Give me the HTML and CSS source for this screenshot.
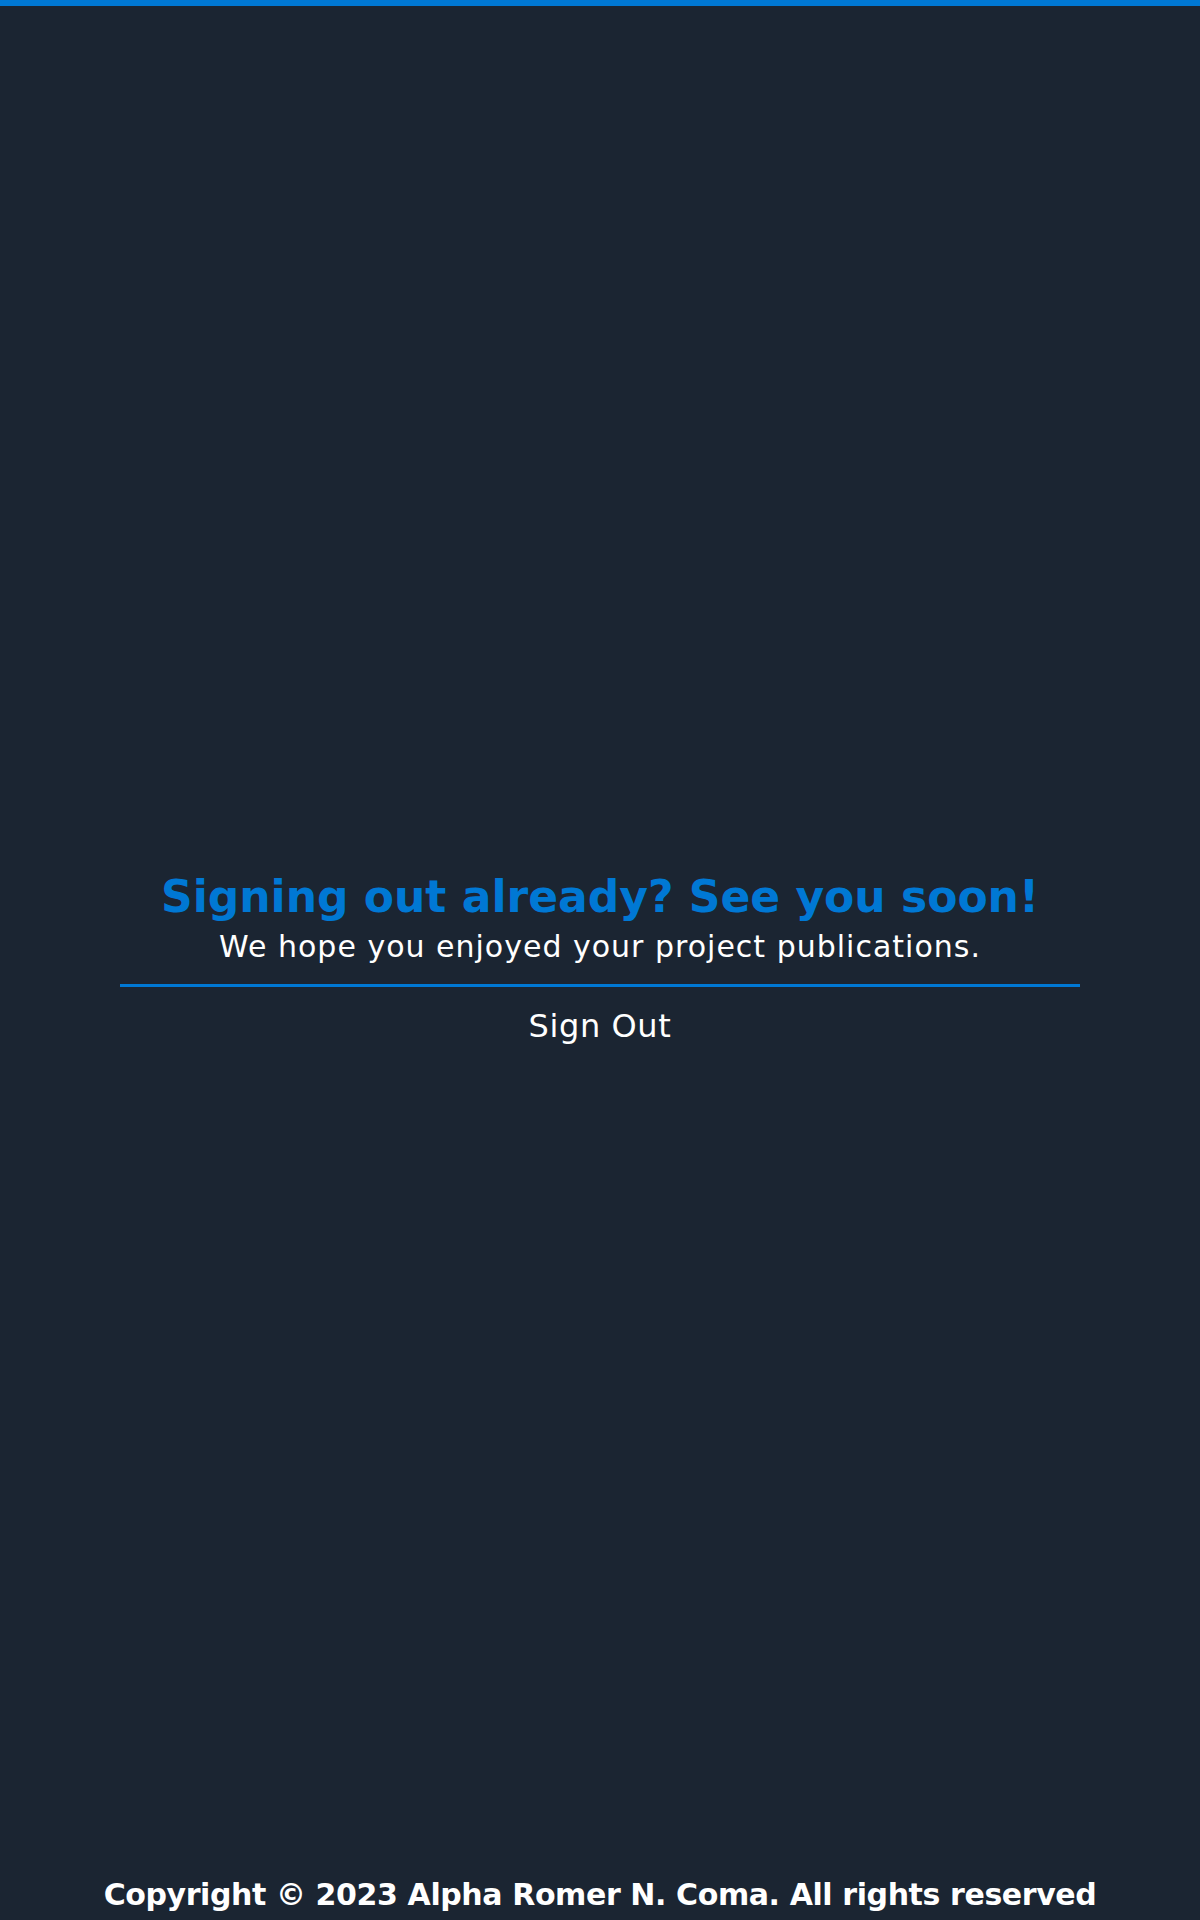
FILE: index.html
```html
<!DOCTYPE html>
<html lang="en">
<head>
<meta charset="utf-8">
<title>Sign Out</title>
<link rel="stylesheet" href="styles.css">
</head>
<body>
<div class="page">
  <div class="topbar"></div>
  <main class="main">
    <section class="signout">
      <h1 class="title">Signing out already? See you soon!</h1>
      <p class="subtitle">We hope you enjoyed your project publications.</p>
      <hr class="divider">
      <a class="signout-link" href="#">Sign Out</a>
    </section>
  </main>
  <footer class="footer">Copyright © 2023 Alpha Romer N. Coma. All rights reserved</footer>
</div>
</body>
</html>
```
FILE: styles.css
```css
html, body {
  margin: 0;
  padding: 0;
  background: #1b2532;
}
.page {
  height: 1920px;
  display: flex;
  flex-direction: column;
  font-family: "DejaVu Sans", "Open Sans", sans-serif;
  color: #ffffff;
}
.topbar {
  height: 6px;
  background: #0078d4;
  flex: none;
}
.main {
  flex: 1;
  display: flex;
  align-items: center;
  justify-content: center;
  padding-top: 33px;
}
.signout {
  width: 960px;
  display: flex;
  flex-direction: column;
  align-items: center;
}
.title {
  margin: 0;
  color: #0078d4;
  font-size: 44px;
  font-weight: 700;
  line-height: 52px;
  white-space: nowrap;
}
.subtitle {
  margin: 6px 0 0;
  font-size: 30px;
  font-weight: 400;
  line-height: 36px;
  letter-spacing: 1px;
  white-space: nowrap;
}
.divider {
  width: 100%;
  border: 0;
  height: 3px;
  background: #0078d4;
  margin: 19px 0 0;
}
.signout-link {
  margin-top: 20px;
  color: #ffffff;
  text-decoration: none;
  font-size: 32px;
  line-height: 38px;
  letter-spacing: 0.6px;
}
.footer {
  flex: none;
  text-align: center;
  font-size: 30px;
  font-weight: 700;
  letter-spacing: -0.4px;
  line-height: 36px;
  padding-bottom: 7px;
  white-space: nowrap;
}
```
